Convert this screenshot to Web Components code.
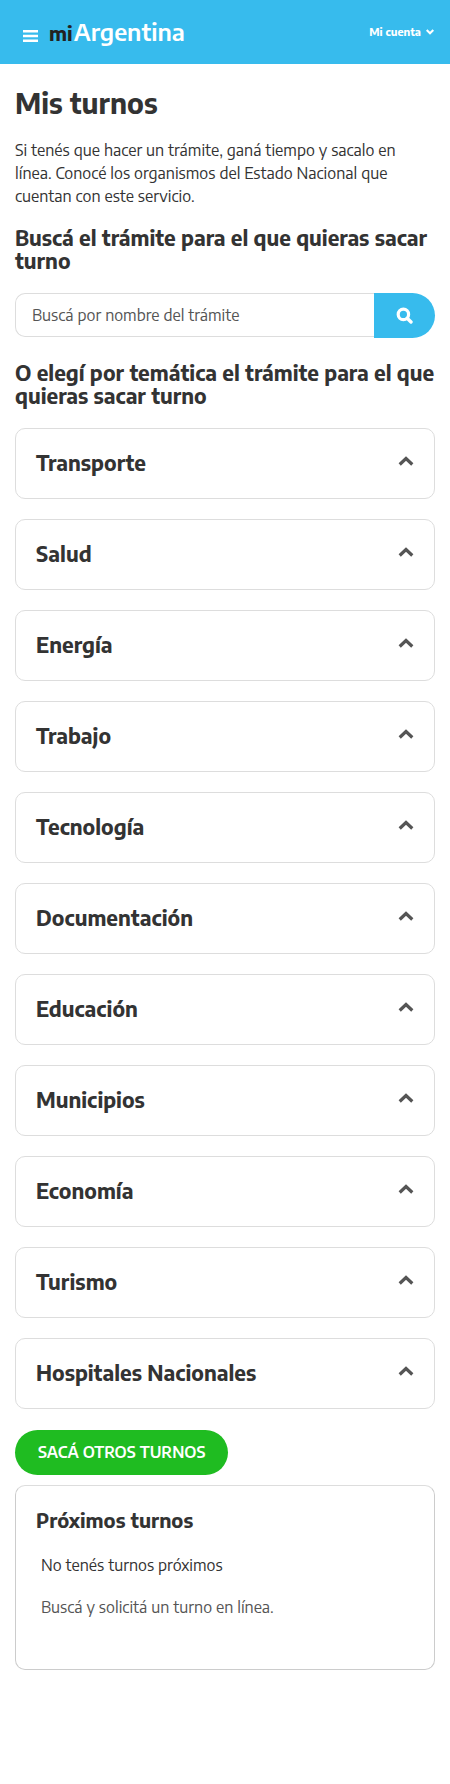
<!DOCTYPE html>
<html lang="es">
<head>
<meta charset="utf-8">
<meta name="viewport" content="width=device-width, initial-scale=1">
<title>Mis turnos - Mi Argentina</title>
<style>
  body { margin: 0; background: #fff; color: #333; font-family: "Encode Sans", "Noto Sans", "Open Sans", sans-serif; font-size: 16px; line-height: 22px; }
</style>
</head>
<body>
<mis-turnos-page></mis-turnos-page>

<template id="site-header">
  <style>
    :host { display: block; background: #37bbed; }
    header { display: flex; align-items: center; height: 64px; padding: 0 16px 0 23px; box-sizing: border-box; color: #fff; }
    button { display: flex; align-items: center; background: none; border: 0; padding: 0; color: #fff; font: inherit; cursor: pointer; }
    .menu { padding-top: 8px; }
    .logo { margin-left: 11px; color: #fff; text-decoration: none; font-size: 24px; line-height: 32px; font-weight: 600; display: flex; align-items: baseline; gap: 1px; }
    .logo b { color: #222; font-size: 20px; font-weight: 700; }
    .account { margin-left: auto; gap: 5px; font-size: 11px; line-height: 16px; font-weight: 700; }
  </style>
  <header>
    <button class="menu" aria-label="Menú">
      <svg width="15" height="12" viewBox="0 0 15 12" fill="currentColor"><path d="M0 0h15v2.4H0zM0 4.8h15v2.4H0zM0 9.6h15V12H0z"/></svg>
    </button>
    <a class="logo" href="#"><b>mi</b><span>Argentina</span></a>
    <button class="account">Mi cuenta
      <svg width="8" height="6" viewBox="0 0 8 6" fill="none" stroke="currentColor" stroke-width="2"><path d="M.7 1 4 4.3 7.3 1"/></svg>
    </button>
  </header>
</template>

<template id="search-box">
  <style>
    :host { display: block; }
    form { display: flex; align-items: flex-start; }
    input { flex: 1; min-width: 0; height: 44px; box-sizing: border-box; margin: 0; padding: 0 16px; border: 1px solid #ddd; border-right: 0; border-radius: 10px 0 0 10px; background: #fff; color: #333; font: inherit; outline: 0; }
    input::placeholder { color: #555; opacity: 1; }
    button { display: flex; align-items: center; justify-content: center; width: 61px; height: 45px; padding: 0; border: 0; border-radius: 0 23px 23px 0; background: #37bbed; color: #fff; cursor: pointer; }
  </style>
  <form>
    <input type="text" placeholder="Buscá por nombre del trámite" aria-label="Buscá por nombre del trámite">
    <button type="button" aria-label="Buscar">
      <svg width="17" height="17" viewBox="0 0 17 17" fill="none" stroke="currentColor"><circle cx="7.4" cy="7.4" r="5.2" stroke-width="3.2"/><path d="m11.2 11.2 3.8 3.8" stroke-width="3.4" stroke-linecap="round"/></svg>
    </button>
  </form>
</template>

<template id="topic-panel">
  <style>
    :host { display: block; }
    button { display: flex; align-items: center; justify-content: space-between; width: 100%; height: 71px; box-sizing: border-box; padding: 0 20px 1px; border: 1px solid #ddd; border-radius: 10px; background: #fff; color: #333; font: inherit; font-size: 21px; line-height: 24px; font-weight: 700; text-align: left; cursor: pointer; }
    h3 { margin: 0; font: inherit; }
    svg { margin-bottom: 4px; color: #555; }
  </style>
  <h3><button aria-expanded="false"><slot></slot>
    <svg width="16" height="10" viewBox="0 0 16 10" fill="none" stroke="currentColor" stroke-width="3.2"><path d="M1.7 8.5 8 2.5l6.3 6"/></svg>
  </button></h3>
</template>

<template id="upcoming-card">
  <style>
    :host { display: block; border: 1px solid #ccc; border-top-color: #ddd; border-radius: 10px; padding: 22px 20px 51px; }
    h2 { margin: 0 0 22px; font-size: 20px; line-height: 24px; font-weight: 700; }
    div { padding: 0 5px; }
    p { margin: 0 0 20px; line-height: 22px; }
    p:last-child { margin: 0; color: #555; }
  </style>
  <h2><slot name="title"></slot></h2>
  <div><p><slot name="status"></slot></p><p><slot name="hint"></slot></p></div>
</template>

<template id="mis-turnos-page">
  <style>
    :host { display: block; }
    main { padding: 23px 15px 114px; }
    h1 { margin: 0; font-size: 28px; line-height: 32px; font-weight: 700; }
    .intro { margin: 20px 0 18px; line-height: 23px; }
    h2 { margin: 0; font-size: 21px; line-height: 23px; font-weight: 700; }
    search-box { margin: 21px 0 23px; }
    .topics { display: flex; flex-direction: column; gap: 20px; margin: 21px 0; }
    .cta { display: block; height: 45px; margin: 0 0 10px; padding: 0 23px 2px; border: 0; border-radius: 23px; background: #1fbc21; color: #fff; font: inherit; font-weight: 600; cursor: pointer; }
  </style>
  <site-header></site-header>
  <main>
    <h1>Mis turnos</h1>
    <p class="intro">Si tenés que hacer un trámite, ganá tiempo y sacalo en línea. Conocé los organismos del Estado Nacional que cuentan con este servicio.</p>
    <h2>Buscá el trámite para el que quieras sacar turno</h2>
    <search-box></search-box>
    <h2>O elegí por temática el trámite para el que quieras sacar turno</h2>
    <div class="topics">
      <topic-panel>Transporte</topic-panel>
      <topic-panel>Salud</topic-panel>
      <topic-panel>Energía</topic-panel>
      <topic-panel>Trabajo</topic-panel>
      <topic-panel>Tecnología</topic-panel>
      <topic-panel>Documentación</topic-panel>
      <topic-panel>Educación</topic-panel>
      <topic-panel>Municipios</topic-panel>
      <topic-panel>Economía</topic-panel>
      <topic-panel>Turismo</topic-panel>
      <topic-panel>Hospitales Nacionales</topic-panel>
    </div>
    <button class="cta">SACÁ OTROS TURNOS</button>
    <upcoming-card>
      <span slot="title">Próximos turnos</span>
      <span slot="status">No tenés turnos próximos</span>
      <span slot="hint">Buscá y solicitá un turno en línea.</span>
    </upcoming-card>
  </main>
</template>

<script>
  class TemplateElement extends HTMLElement {
    constructor() {
      super();
      const template = document.getElementById(this.localName);
      this.attachShadow({ mode: "open" }).append(template.content.cloneNode(true));
    }
  }
  customElements.define("site-header", class extends TemplateElement {});
  customElements.define("search-box", class extends TemplateElement {});
  customElements.define("topic-panel", class extends TemplateElement {
    connectedCallback() {
      const button = this.shadowRoot.querySelector("button");
      button.onclick = () => button.setAttribute("aria-expanded", button.getAttribute("aria-expanded") !== "true");
    }
  });
  customElements.define("upcoming-card", class extends TemplateElement {});
  customElements.define("mis-turnos-page", class extends TemplateElement {});
</script>
</body>
</html>
